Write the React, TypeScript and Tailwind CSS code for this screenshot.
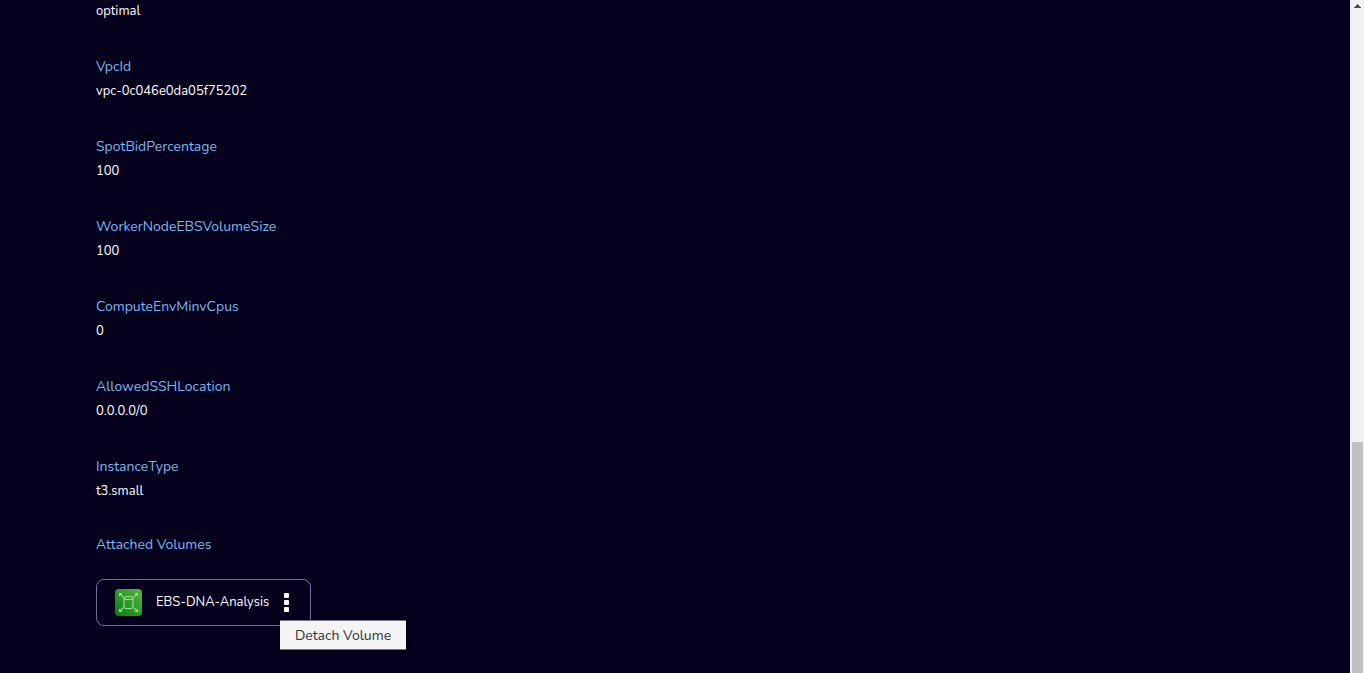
import React from 'react';

interface Parameter {
  name: string;
  value: string;
}

const parameters: Parameter[] = [
  { name: 'VpcId', value: 'vpc-0c046e0da05f75202' },
  { name: 'SpotBidPercentage', value: '100' },
  { name: 'WorkerNodeEBSVolumeSize', value: '100' },
  { name: 'ComputeEnvMinvCpus', value: '0' },
  { name: 'AllowedSSHLocation', value: '0.0.0.0/0' },
  { name: 'InstanceType', value: 't3.small' }
];

/* EBS volume icon */
const VolumeIcon: React.FC = () => (
  <svg width="27" height="27" viewBox="0 0 27 27" fill="none" aria-hidden="true">
    <defs>
      <linearGradient id="ebs" x1="0" y1="27" x2="27" y2="0" gradientUnits="userSpaceOnUse">
        <stop stopColor="#0a7d16" />
        <stop offset="1" stopColor="#55b83a" />
      </linearGradient>
    </defs>
    <rect width="27" height="27" rx="4" fill="url(#ebs)" />
    <g stroke="#a5dc9c" strokeWidth="1.100">
      <ellipse cx="13.5" cy="9" rx="4.500" ry="1.500" />
      <path d="M9 9v9c0 .9 2 1.500 4.500 1.500s4.500-.6 4.500-1.500V9" />
      <path d="M8 8 5 5M19 8l3-3M8 19l-3 3M19 19l3 3" />
    </g>
    <path
      d="M4 4h3.500L4 7.500zM23 4h-3.500L23 7.500zM4 23h3.500L4 19.500zM23 23h-3.500l3.500-3.500z"
      fill="#a5dc9c"
    />
  </svg>
);

const Scrollbar: React.FC = () => (
  <div className="flex w-3.5 shrink-0 flex-col items-center bg-[#f1f1f1]" aria-hidden="true">
    <svg width="7" height="4" viewBox="0 0 7 4" className="mt-1 shrink-0" shapeRendering="crispEdges">
      <path d="M3 0h1v1h1v1h1v1h1v1H0V3h1V2h1V1h1z" fill="#505050" />
    </svg>
    <div className="grow-[434]" />
    <div className="w-[11px] grow-[231] bg-[#c1c1c1]" />
  </div>
);

const App: React.FC = () => {
  return (
    <div className="flex min-h-screen bg-[#05001c] font-['Nunito','Noto_Sans',sans-serif] text-[13px] text-white">
      <main className="flex-1 px-24">
        <dl>
          <dd className="leading-[23px]">optimal</dd>
          {parameters.map(param => (
            <div key={param.name} className="pt-8 leading-6">
              <dt className="text-[14px] text-[#79b8f0]">{param.name}</dt>
              <dd>{param.value}</dd>
            </div>
          ))}
        </dl>

        {/* Attached volumes */}
        <h2 className="mt-[30px] text-[14px] leading-6 text-[#79b8f0]">Attached Volumes</h2>
        <div className="mt-[22px] flex h-[47px] w-[215px] items-center rounded-lg border border-[#6f6b9c] pl-[18px]">
          <VolumeIcon />
          <span className="ml-3.5 whitespace-nowrap">EBS-DNA-Analysis</span>
          <div className="relative ml-auto mr-[21px]">
            <button type="button" aria-label="Volume actions" className="flex flex-col gap-0.5">
              <span className="size-[5px] rounded-[1px] bg-white" />
              <span className="size-[5px] rounded-[1px] bg-white" />
              <span className="size-[5px] rounded-[1px] bg-white" />
            </button>
            <div className="absolute -left-1 top-full mt-2 shadow-lg">
              <button
                type="button"
                className="h-[30px] w-[126px] whitespace-nowrap border-y border-[#77758a] bg-[#f5f5f5] text-[14px] text-[#333333]"
              >
                Detach Volume
              </button>
            </div>
          </div>
        </div>
      </main>
      <Scrollbar />
    </div>
  );
};

export default App;
